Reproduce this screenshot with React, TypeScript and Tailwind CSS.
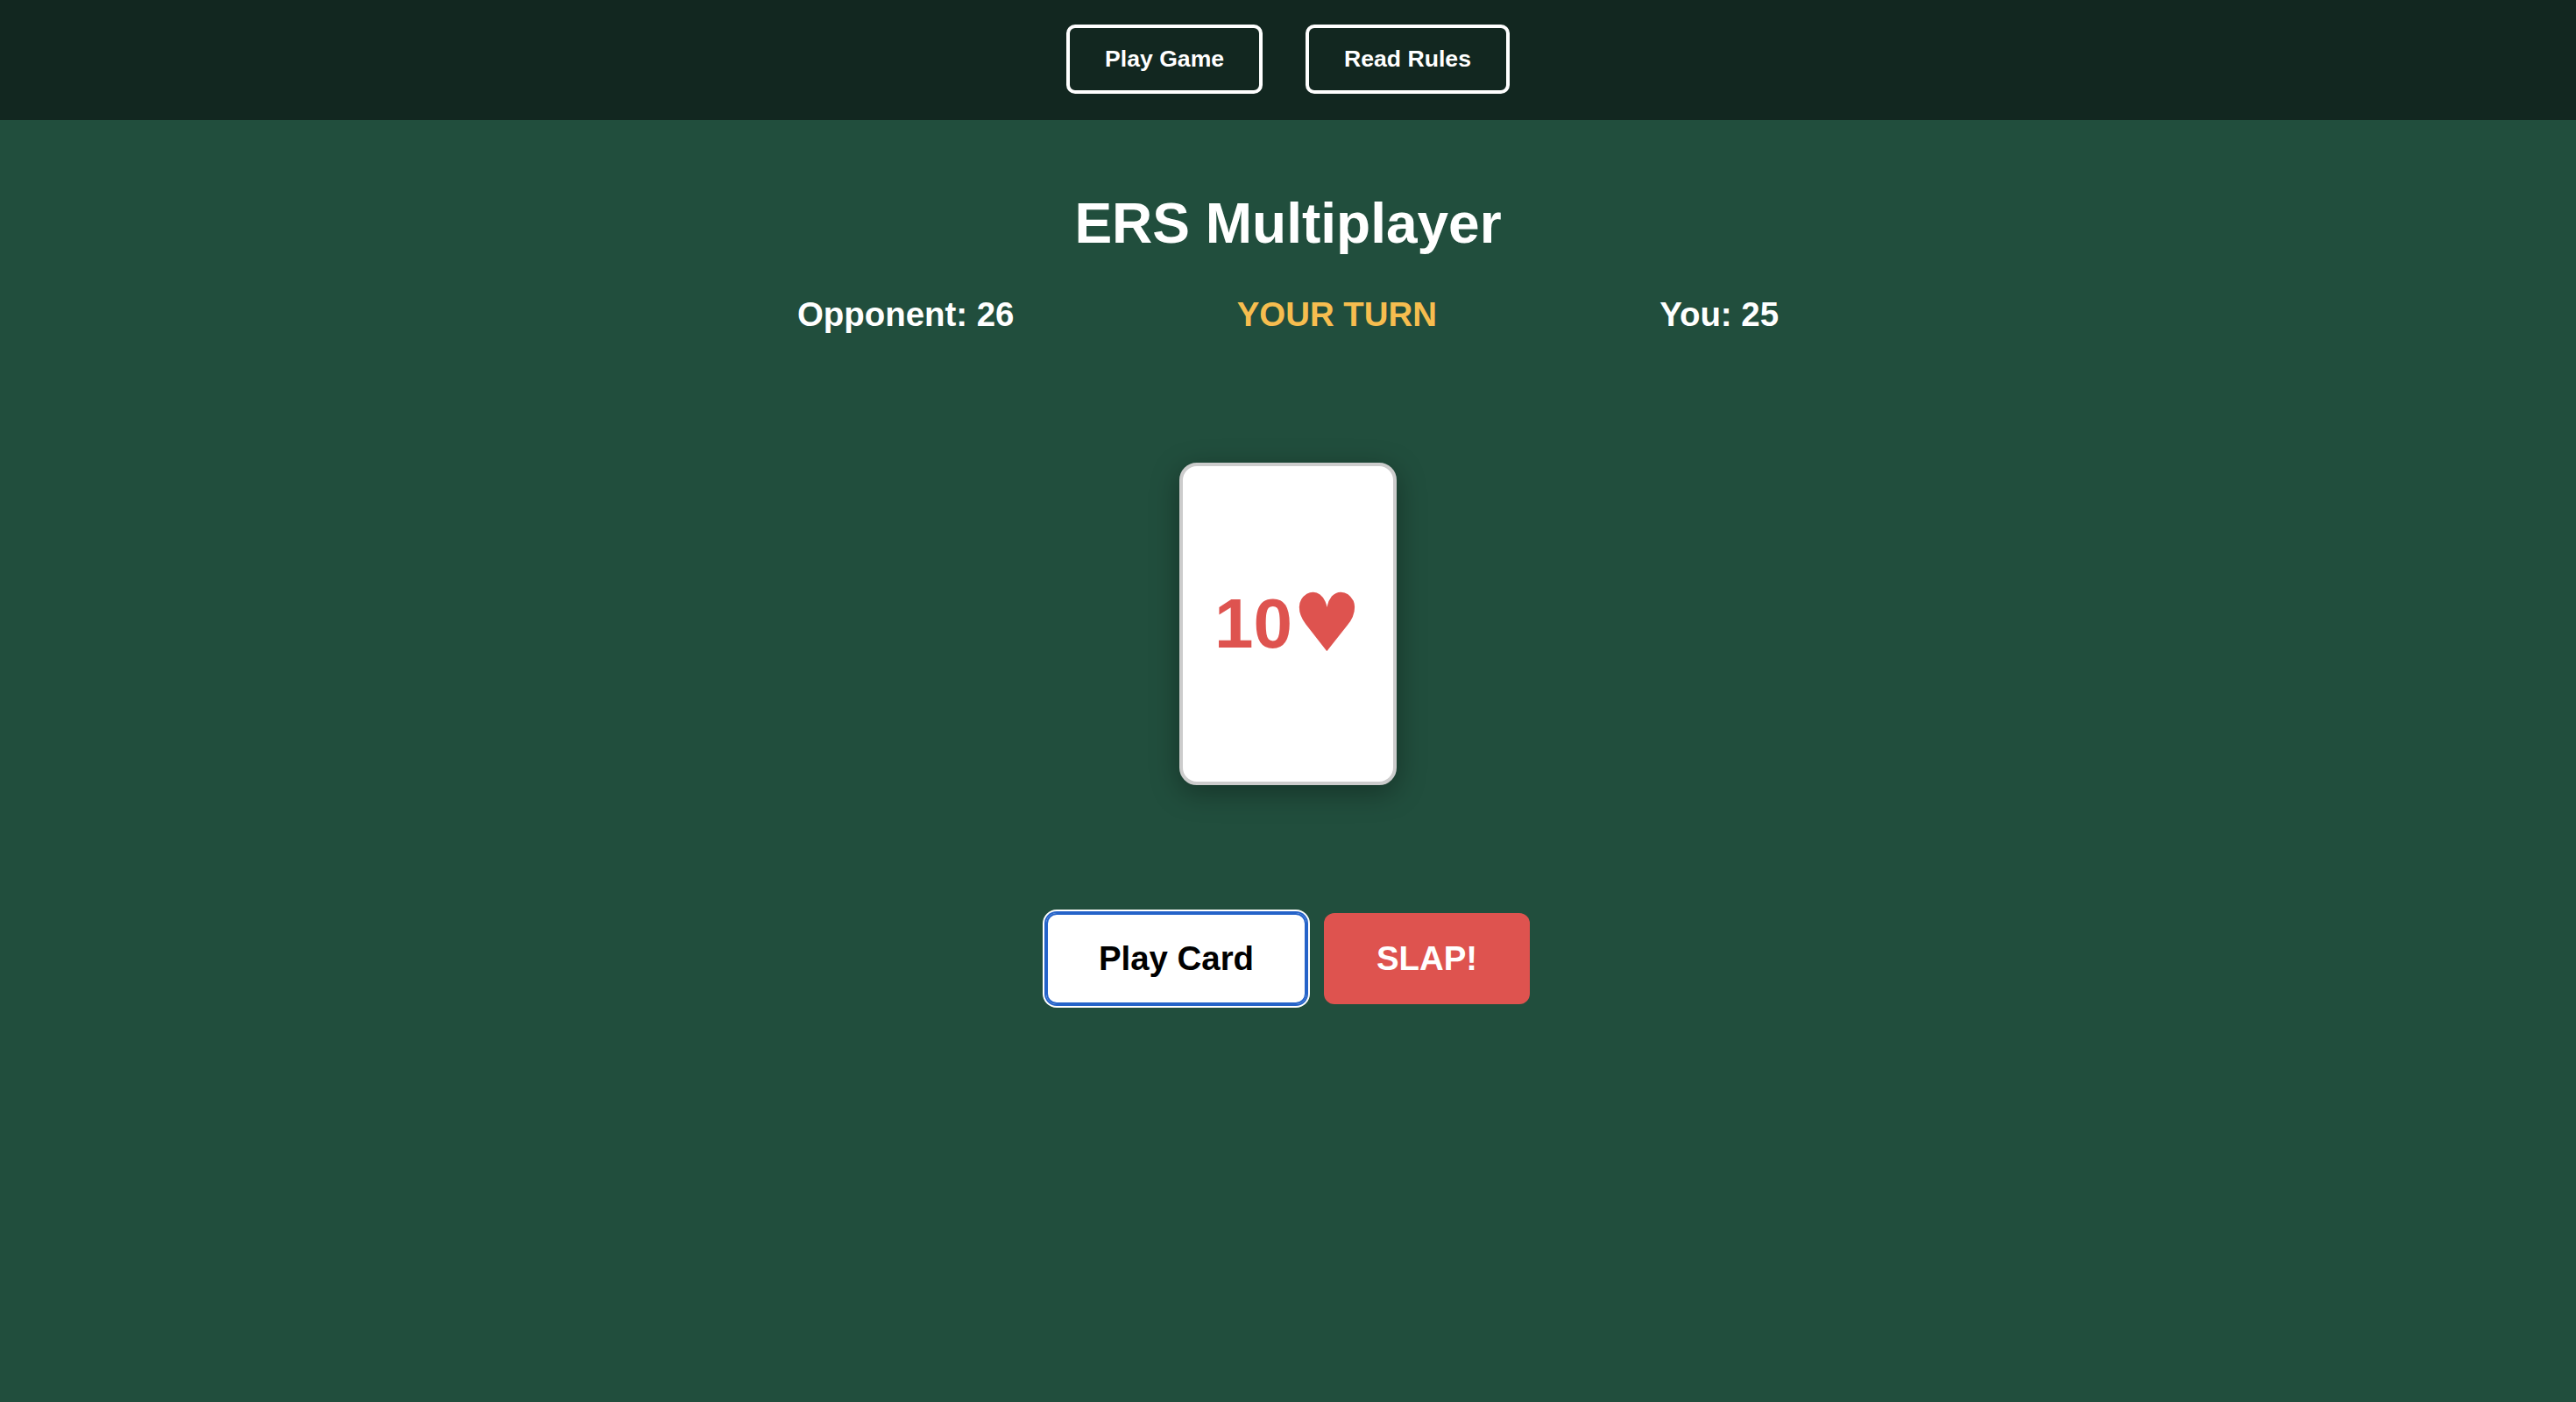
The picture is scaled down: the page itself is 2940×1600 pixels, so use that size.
const font = "font-['Liberation_Sans',Arial,sans-serif]";

function NavButton({ children }: { children: string }) {
  return (
    <button className="h-[79px] px-[40px] rounded-[10px] border-[4px] border-white text-white text-[26.6px] font-bold">
      {children}
    </button>
  );
}

export default function App() {
  return (
    <div className={`min-h-screen flex flex-col bg-[#214e3d] ${font}`}>
      <nav className="h-[137px] pt-[28px] flex justify-center gap-[49px] bg-[#122720]">
        <NavButton>Play Game</NavButton>
        <NavButton>Read Rules</NavButton>
      </nav>

      <main className="flex flex-col items-center pt-[82px]">
        <h1 className="text-[64px] leading-[72px] font-bold text-white">ERS Multiplayer</h1>

        <div className="w-[1120px] mt-[45px] flex justify-between text-[38.4px] leading-[46px] font-bold text-white">
          <div>Opponent: 26</div>
          <div className="text-[#f6bd4f]">YOUR TURN</div>
          <div>You: 25</div>
        </div>

        <div className="w-[248px] h-[368px] my-[146px] flex items-center justify-center rounded-[20px] border-[4px] border-[#cccccc] bg-white shadow-[0_8px_32px_rgba(0,0,0,0.35)] text-[#de534f] font-bold">
          <span className="text-[80px] leading-none">10</span>
          <span className="inline-block text-[88px] leading-none scale-y-105 font-['DejaVu_Sans']">♥</span>
        </div>

        <div className="flex gap-[20px]">
          <button className="h-[104px] w-[297px] rounded-[12px] bg-white text-black text-[38.4px] font-bold shadow-[inset_0_0_0_2px_#2563c9,0_0_0_2px_#2563c9,0_0_0_4px_#ffffff]">
            Play Card
          </button>
          <button className="h-[104px] w-[235px] rounded-[12px] bg-[#de534f] text-white text-[38.4px] font-bold">
            SLAP!
          </button>
        </div>
      </main>
    </div>
  );
}
